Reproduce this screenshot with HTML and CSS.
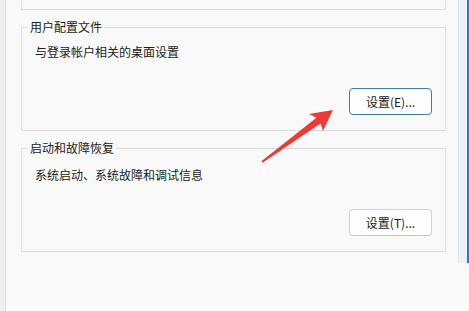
FILE: index.html
```html
<!DOCTYPE html>
<html lang="zh-CN">
<head>
    <meta charset="UTF-8">
    <title>系统属性</title>
    <link rel="stylesheet" href="styles.css">
</head>
<body>
    <div class="side-left"></div>

    <div class="main">
        <div class="group-top"></div>

        <fieldset class="group">
            <legend>用户配置文件</legend>
            <p class="desc">与登录帐户相关的桌面设置</p>
            <div class="actions actions-first">
                <button class="btn btn-default">设置(E)...</button>
            </div>
        </fieldset>

        <fieldset class="group group-second">
            <legend>启动和故障恢复</legend>
            <p class="desc desc-second">系统启动、系统故障和调试信息</p>
            <div class="actions">
                <button class="btn">设置(T)...</button>
            </div>
        </fieldset>
    </div>

    <div class="side-right"></div>

    <svg class="arrow" width="469" height="311" viewBox="0 0 469 311">
        <polygon points="333,110 309,114 316.4,117.8 261.4,161.2 262.6,162.8 320.6,123.4 323,131" fill="#ee3a36"/>
    </svg>
</body>
</html>
```

FILE: styles.css
```css
body {
    margin: 0;
    width: 469px;
    height: 311px;
    overflow: hidden;
    display: flex;
    background-color: #f9f9f9;
    color: #1a1a1a;
    font-family: "Noto Sans CJK SC", "Liberation Sans", sans-serif;
    font-size: 12px;
}
.side-left {
    width: 5px;
    background-color: #efefef;
    border-right: 1px solid #dedede;
}
.main {
    flex: 1;
    padding: 0 12px 0 15px;
}
.group-top {
    height: 9px;
    border: 1px solid #dcdcdc;
    border-top: none;
}
.group {
    margin: 9px 0 0 0;
    padding: 0 13px 15px 6px;
    border: 1px solid #dcdcdc;
    min-width: 0;
}
.group legend {
    padding: 0 2px;
    line-height: 16px;
}
.desc {
    margin: 9px 0 0 0;
    padding-left: 7px;
    line-height: 16px;
}
.desc-second {
    margin-top: 11px;
}
.actions {
    display: flex;
    justify-content: flex-end;
    margin-top: 26px;
}
.actions-first {
    margin-top: 28px;
}
.btn {
    width: 83px;
    height: 27px;
    padding: 0;
    font-family: inherit;
    font-size: 12px;
    color: #1a1a1a;
    background-color: #fdfdfd;
    border: 1px solid #d3d3d3;
    border-bottom-color: #c4c4c4;
    border-radius: 4px;
}
.btn-default {
    border-color: #3d7ca3;
}
.side-right {
    align-self: flex-start;
    width: 8px;
    height: 263px;
    background-color: #eef1f3;
    border-left: 1px solid #e2e6e9;
    border-right: 2px solid #1e7fcf;
}
.arrow {
    position: absolute;
    left: 0;
    top: 0;
    pointer-events: none;
}
```
